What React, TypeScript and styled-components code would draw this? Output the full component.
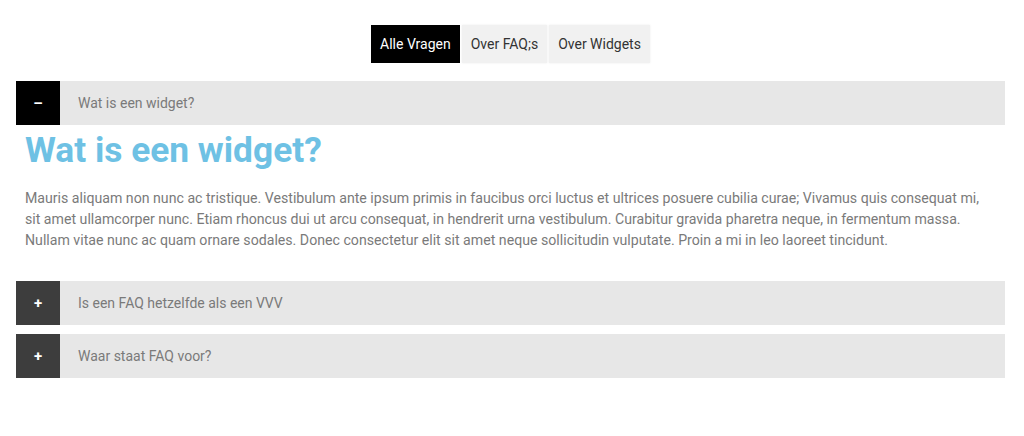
import React, { useState } from "react";
import styled, { createGlobalStyle } from "styled-components";

const Global = createGlobalStyle`
  html, body { margin: 0; padding: 0; background: #fff; }
  body { font-family: Roboto, "Liberation Sans", Arial, sans-serif; }
  * { box-sizing: border-box; }
`;

const Page = styled.div`
  padding: 25px 19px 0 16px;
`;

const Tabs = styled.div`
  display: flex;
  justify-content: center;
  gap: 1px;
  margin-bottom: 18px;
`;

const Tab = styled.button<{ $active?: boolean }>`
  height: 38px;
  border: none;
  margin: 0;
  padding: 0 9px;
  font-family: Roboto, "Liberation Sans", Arial, sans-serif;
  font-size: 14px;
  background: ${(p) => (p.$active ? "#000" : "#f1f1f1")};
  color: ${(p) => (p.$active ? "#fff" : "#333")};
  box-shadow: ${(p) => (p.$active ? "none" : "0 0 2px rgba(0,0,0,0.08)")};
  cursor: pointer;
  & + & {
    margin-left: 1px;
  }
`;

const List = styled.div`
  display: flex;
  flex-direction: column;
  gap: 9px;
`;

const Item = styled.div``;

const Header = styled.div`
  display: flex;
  align-items: center;
  height: 44px;
  background: #e7e7e7;
  cursor: pointer;
`;

const Icon = styled.div<{ $open?: boolean }>`
  width: 44px;
  height: 44px;
  flex: none;
  display: flex;
  align-items: center;
  justify-content: center;
  background: ${(p) => (p.$open ? "#000" : "#3d3d3d")};
  color: #fff;
  font-size: 15px;
  font-weight: 700;
`;

const Title = styled.div`
  padding-left: 18px;
  font-size: 14px;
  color: #7a7a7a;
`;

const Panel = styled.div`
  padding: 4px 9px 21px 9px;
`;

const Heading = styled.h2`
  margin: 0 0 16px;
  font-size: 35.3px;
  line-height: 43px;
  font-weight: 700;
  color: #6ec1e4;
`;

const Text = styled.p`
  margin: 0;
  font-size: 14.15px;
  line-height: 21px;
  color: #7a7a7a;
`;

const faqs = [
  {
    q: "Wat is een widget?",
    a: "Mauris aliquam non nunc ac tristique. Vestibulum ante ipsum primis in faucibus orci luctus et ultrices posuere cubilia curae; Vivamus quis consequat mi, sit amet ullamcorper nunc. Etiam rhoncus dui ut arcu consequat, in hendrerit urna vestibulum. Curabitur gravida pharetra neque, in fermentum massa. Nullam vitae nunc ac quam ornare sodales. Donec consectetur elit sit amet neque sollicitudin vulputate. Proin a mi in leo laoreet tincidunt.",
  },
  { q: "Is een FAQ hetzelfde als een VVV", a: "" },
  { q: "Waar staat FAQ voor?", a: "" },
];

export default function App() {
  const [open, setOpen] = useState(0);
  const [tab, setTab] = useState(0);
  const tabs = ["Alle Vragen", "Over FAQ;s", "Over Widgets"];
  return (
    <Page>
      <Global />
      <Tabs>
        {tabs.map((t, i) => (
          <Tab key={t} $active={tab === i} onClick={() => setTab(i)}>
            {t}
          </Tab>
        ))}
      </Tabs>
      <List>
        {faqs.map((f, i) => (
          <Item key={f.q}>
            <Header onClick={() => setOpen(open === i ? -1 : i)}>
              <Icon $open={open === i}>{open === i ? "–" : "+"}</Icon>
              <Title>{f.q}</Title>
            </Header>
            {open === i && (
              <Panel>
                <Heading>{f.q}</Heading>
                <Text>{f.a}</Text>
              </Panel>
            )}
          </Item>
        ))}
      </List>
    </Page>
  );
}
